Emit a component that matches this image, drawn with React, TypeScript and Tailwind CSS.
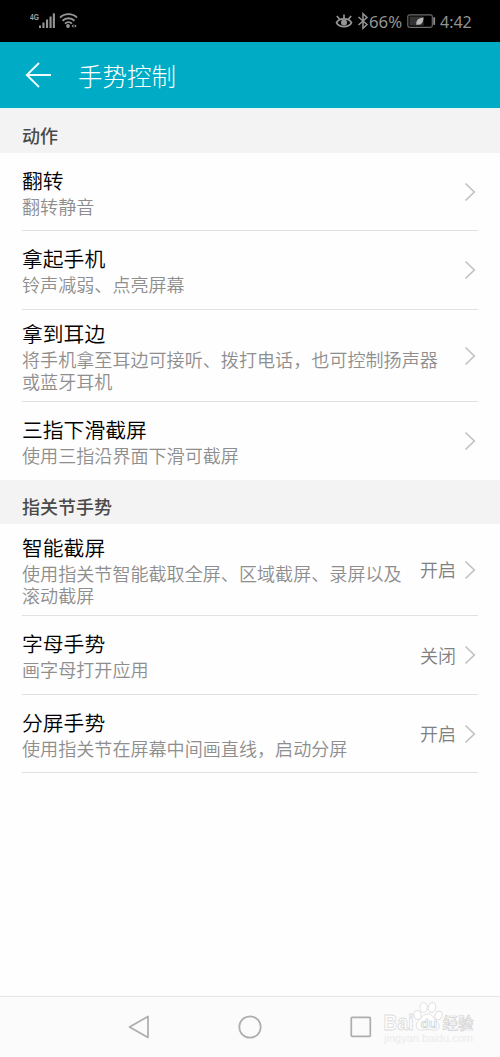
import { Fragment } from 'react';

type Item = { title: string; desc: string[]; value?: string; height: string };

const actions: Item[] = [
  { title: '翻转', desc: ['翻转静音'], height: 'h-[78px]' },
  { title: '拿起手机', desc: ['铃声减弱、点亮屏幕'], height: 'h-[79px]' },
  { title: '拿到耳边', desc: ['将手机拿至耳边可接听、拨打电话，也可控制扬声器', '或蓝牙耳机'], height: 'h-[92px]' },
  { title: '三指下滑截屏', desc: ['使用三指沿界面下滑可截屏'], height: 'h-[78px]' },
];

const knuckle: Item[] = [
  { title: '智能截屏', desc: ['使用指关节智能截取全屏、区域截屏、录屏以及', '滚动截屏'], value: '开启', height: 'h-[92px]' },
  { title: '字母手势', desc: ['画字母打开应用'], value: '关闭', height: 'h-[79px]' },
  { title: '分屏手势', desc: ['使用指关节在屏幕中间画直线，启动分屏'], value: '开启', height: 'h-[78px]' },
];

function StatusBar() {
  return (
    <div className="flex h-[42px] shrink-0 items-center justify-between bg-black pl-[30px] pr-[27px] text-[#939393]">
      <svg className="h-[20px] w-[50px]" viewBox="0 0 50 20" fill="none">
        <text x="0" y="8.500" fontSize="9.500" fontWeight="700" textLength="9" lengthAdjust="spacingAndGlyphs" fill="#a0a0a0" fontFamily="Liberation Sans, sans-serif">4G</text>
        <g fill="#959595">
          <rect x="9" y="14.500" width="2" height="2.500" />
          <rect x="12.400" y="11.500" width="2.100" height="5.500" />
          <rect x="16" y="8.500" width="2.100" height="8.500" />
          <rect x="19.500" y="5.500" width="2.100" height="11.500" />
          <rect x="22.800" y="2.300" width="2.100" height="14.700" />
          <circle cx="38" cy="15" r="1.900" />
          <path d="M41.500 15l2-1.800v3.600zM44.700 13.200l2 1.800-2 1.800z" />
        </g>
        <g stroke="#959595" strokeWidth="1.900">
          <path d="M30 6.600c4.700-4.600 12.300-4.600 17 0" />
          <path d="M32.500 9.700c3.400-3.300 8.600-3.300 12 0" />
          <path d="M35 12.600c2-1.900 5-1.900 7 0" />
        </g>
      </svg>
      <div className="flex items-center font-['Noto_Sans','Noto_Sans_CJK_SC',sans-serif] text-[16.800px] leading-none">
        <svg className="h-[18px] w-[18px]" viewBox="0 0 18 18" fill="none" stroke="#959595" strokeWidth="1.700">
          <path d="M1.500 10.700C4 5.500 14 5.500 16.500 10.700 14 16 4 16 1.500 10.700z" />
          <path d="M9 6V2.500M4.500 7L1.800 4M13.500 7L16.200 4" />
          <circle cx="9" cy="10.500" r="3" fill="#959595" stroke="none" />
        </svg>
        <svg className="ml-[4px] h-[18px] w-[12px]" viewBox="0 0 12 18" fill="none" stroke="#959595" strokeWidth="1.500">
          <path d="M1.500 5l8.500 7.500L6 16.200V1.800L10 5.500 1.500 13" />
        </svg>
        <span className="w-[34px] whitespace-nowrap pt-[2px]">66%</span>
        <svg className="ml-[4px] h-[16px] w-[29px]" viewBox="0 0 29 16" fill="none">
          <rect x="0.800" y="1.800" width="24.500" height="12.500" rx="1.800" stroke="#6c6c6c" strokeWidth="1.200" />
          <rect x="2.500" y="3.500" width="14" height="9" fill="#333" />
          <rect x="26.300" y="4.300" width="1.800" height="7.500" fill="#8f8f8f" />
          <path d="M9.500 11.800c-1-4 2-7 7-7.200 0 5-2.500 8-6 7l-1.200 1z" fill="#b8b8b8" />
        </svg>
        <span className="ml-[4px] w-[33px] whitespace-nowrap pt-[2px] text-[16px]">4:42</span>
      </div>
    </div>
  );
}

function SectionTitle({ children }: { children: string }) {
  return (
    <div className="flex h-[44px] shrink-0 items-center bg-[#f3f3f3] px-[22px] pt-[8px] text-[18px] font-medium leading-none text-[#4a4a4a]">
      {children}
    </div>
  );
}

function Row({ item, divider }: { item: Item; divider: boolean }) {
  return (
    <div className={`mx-[22px] flex shrink-0 items-center border-b ${divider ? 'border-[#e2e2e2]' : 'border-transparent'} ${item.height}`}>
      <div className="flex-1 whitespace-nowrap">
        <div className="pb-[2px] text-[20.800px] font-[350] leading-[28px] text-black">{item.title}</div>
        <div className="text-[18.080px] font-[350] leading-[21.500px] text-[#8e8e8e]">
          {item.desc.map((line, i) => (
            <Fragment key={line}>
              {i > 0 && <br />}
              {line}
            </Fragment>
          ))}
        </div>
      </div>
      {item.value && <span className="mr-[8px] pb-px text-[18px] font-[350] leading-none text-[#808080]">{item.value}</span>}
      <svg className="mr-[2px] h-[20px] w-[12px]" viewBox="0 0 12 20" fill="none" stroke="#c2c2c2" strokeWidth="1.700">
        <path d="M1.500 1.500L10.300 10 1.500 18.500" />
      </svg>
    </div>
  );
}

function Watermark() {
  return (
    <svg className="absolute left-[382px] top-[2px] h-[46px] w-[94px]" viewBox="0 0 94 46" fill="#fff" stroke="#dcdcdc" strokeWidth="0.900">
      <text x="1.500" y="31" fontSize="22" fontWeight="700" textLength="30" lengthAdjust="spacingAndGlyphs" fontFamily="Liberation Sans, sans-serif">Bai</text>
      <ellipse cx="35.500" cy="16" rx="3.500" ry="4.500" transform="rotate(-15 35.500 16)" />
      <ellipse cx="41.500" cy="8.500" rx="3.700" ry="5" />
      <ellipse cx="50" cy="8.500" rx="3.700" ry="5" transform="rotate(12 50 8.500)" />
      <ellipse cx="56.500" cy="16.500" rx="3.500" ry="4.500" transform="rotate(18 56.500 16.500)" />
      <path d="M46 15c4 0 5 4 9 7.500 5 5 1 9.500-4 8.500-3-.7-7-.7-10 0-5 1-9.500-3.500-5-8.500 4-3.500 5-7.500 10-7.500z" />
      <text x="38.500" y="29" fontSize="13.500" fontWeight="700" stroke="#cfcfcf" strokeWidth="0.700" fontFamily="Liberation Sans, sans-serif">du</text>
      <text x="60.500" y="29.500" fontSize="15.500" fontWeight="500" textLength="31" stroke="#d2d2d2" strokeWidth="0.700" fontFamily="Noto Sans CJK SC, sans-serif">经验</text>
      <text x="2" y="42.500" fontSize="10.500" textLength="89" lengthAdjust="spacingAndGlyphs" fill="#ebebeb" stroke="none" fontFamily="Liberation Sans, sans-serif">jingyan.baidu.com</text>
    </svg>
  );
}

export default function App() {
  return (
    <div className="flex h-[1057px] w-[500px] flex-col overflow-hidden bg-[#fefefe] font-['Noto_Sans_CJK_SC',sans-serif]">
      <StatusBar />
      <header className="flex h-[66px] shrink-0 items-center bg-[#00acc5] pl-[25px] text-white">
        <svg className="h-[28px] w-[28px]" viewBox="0 0 28 28" fill="none" stroke="#effcff" strokeWidth="1.900">
          <path d="M14 2L1.800 14 14 26M1.800 14H26" />
        </svg>
        <h1 className="ml-[25px] pt-[2px] text-[24.500px] font-light leading-none text-white">手势控制</h1>
      </header>
      <main className="flex flex-1 flex-col">
        <div className="h-px shrink-0 bg-[#e5f7f8]" />
        <SectionTitle>动作</SectionTitle>
        {actions.map((item, i) => <Row key={item.title} item={item} divider={i < actions.length - 1} />)}
        <SectionTitle>指关节手势</SectionTitle>
        {knuckle.map((item) => <Row key={item.title} item={item} divider />)}
      </main>
      <nav className="relative h-[61px] shrink-0 border-t border-[#e6e6e6] bg-[#fbfbfb]">
        <div className="flex h-[59px] items-center justify-between px-[127px]">
          <svg className="h-[24px] w-[24px]" viewBox="0 0 24 24" fill="none" stroke="#adadad" strokeWidth="1.700" strokeLinejoin="round">
            <path d="M21 1.500v21L2.500 12z" />
          </svg>
          <svg className="h-[24px] w-[24px]" viewBox="0 0 24 24" fill="none" stroke="#adadad" strokeWidth="1.700">
            <circle cx="12" cy="12" r="10.700" />
          </svg>
          <svg className="h-[24px] w-[24px]" viewBox="0 0 24 24" fill="none" stroke="#adadad" strokeWidth="1.700">
            <rect x="2.300" y="2.300" width="19" height="19" rx="0.800" />
          </svg>
        </div>
        <Watermark />
      </nav>
    </div>
  );
}
